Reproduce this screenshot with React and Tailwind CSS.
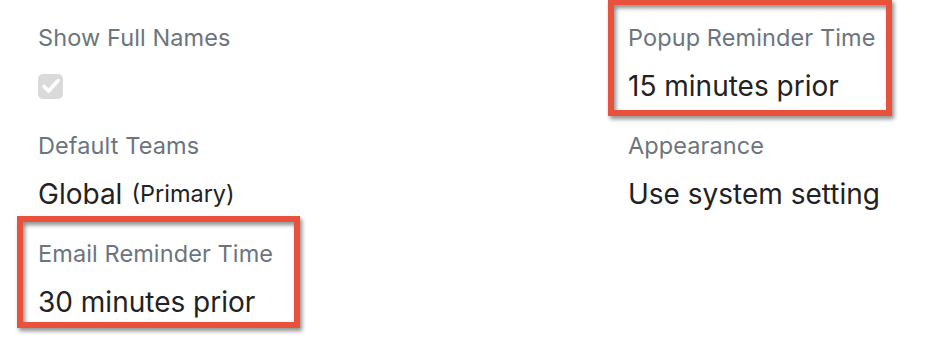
import React from 'react'

const font = { fontFamily: 'Inter, "Noto Sans", sans-serif' }

function Highlight({ className }) {
  return (
    <div
      className={
        'pointer-events-none absolute border-[6px] border-[#e8513b] drop-shadow-[2px_3px_2px_rgba(0,0,0,0.45)] ' +
        className
      }
    />
  )
}

function Field({ label, children, highlight }) {
  return (
    <div className='relative flex flex-col'>
      <div className='text-[23.5px] leading-[28px] tracking-[0.1px] text-[#6b757e]'>{label}</div>
      <div className='mt-[18px] flex h-[32px] items-center text-[28px] leading-[32px] text-[#222]'>
        {children}
      </div>
      {highlight}
    </div>
  )
}

function CheckBox() {
  return (
    <div className='flex h-[25px] w-[25px] items-center justify-center rounded-[5px] bg-[#dadada]'>
      <svg width='20' height='20' viewBox='0 0 16 16' fill='none'>
        <path d='M2.4 8.4l3.6 3.6L13.6 3.8' stroke='white' strokeWidth='3' strokeLinecap='round' strokeLinejoin='round' />
      </svg>
    </div>
  )
}

export default function App() {
  return (
    <div className='h-[340px] w-[932px] overflow-hidden bg-white pl-[38px] pt-[24px]' style={font}>
      <div className='grid grid-cols-[590px_1fr] gap-y-[30px]'>
        <Field label='Show Full Names'>
          <CheckBox />
        </Field>
        <Field
          label='Popup Reminder Time'
          highlight={<Highlight className='left-[-20px] top-[-25px] bottom-[-14px] w-[284px]' />}
        >
          15 minutes prior
        </Field>
        <Field label='Default Teams'>
          Global<span className='ml-[9px] text-[23.5px]'>(Primary)</span>
        </Field>
        <Field label='Appearance'>Use system setting</Field>
        <Field
          label='Email Reminder Time'
          highlight={<Highlight className='left-[-21px] top-[-24px] bottom-[-10px] w-[283px]' />}
        >
          30 minutes prior
        </Field>
      </div>
    </div>
  )
}
